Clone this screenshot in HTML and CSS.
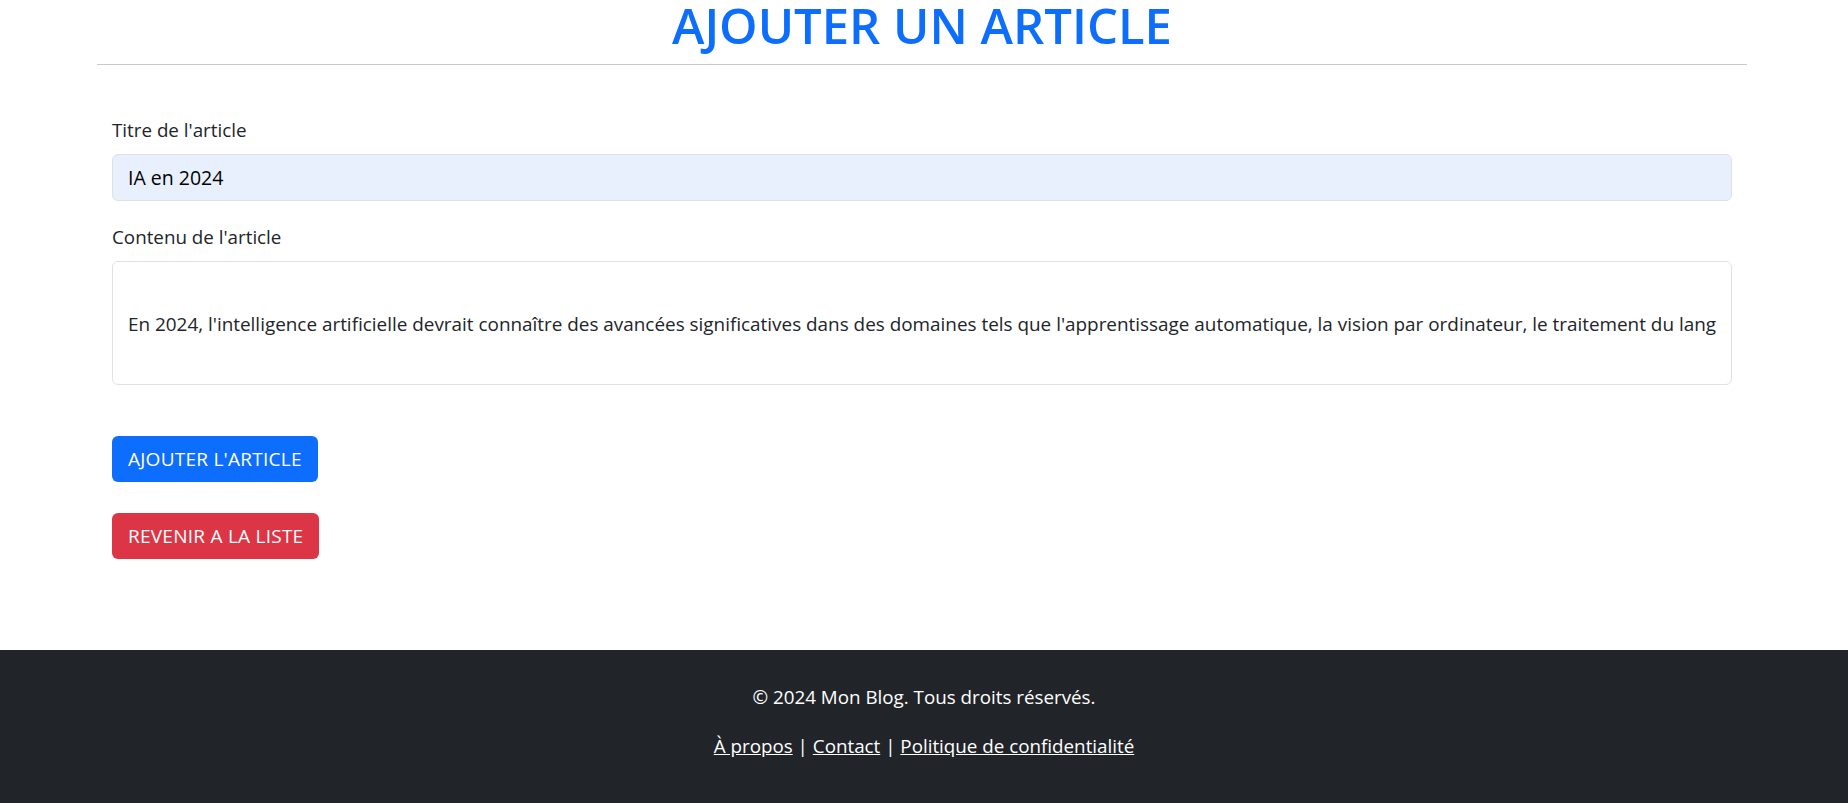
FILE: index.html
```html
<!DOCTYPE html>
<html lang="fr">
<head>
<meta charset="utf-8">
<title>Ajouter un article</title>
<link rel="stylesheet" href="styles.css">
</head>
<body>
<main class="page">
  <h1 class="page-title">AJOUTER UN ARTICLE</h1>
  <hr class="rule">
  <form class="article-form">
    <div class="field">
      <label class="field-label" for="titre">Titre de l'article</label>
      <input class="field-input" id="titre" type="text" value="IA en 2024">
    </div>
    <div class="field">
      <label class="field-label" for="contenu">Contenu de l'article</label>
      <div class="field-area" id="contenu"><div class="field-area-text">En 2024, l'intelligence artificielle devrait connaître des avancées significatives dans des domaines tels que l'apprentissage automatique, la vision par ordinateur, le traitement du lang</div></div>
    </div>
    <div class="actions">
      <button type="button" class="btn btn-primary">AJOUTER L'ARTICLE</button>
      <button type="button" class="btn btn-danger">REVENIR A LA LISTE</button>
    </div>
  </form>
</main>
<footer class="site-footer">
  <p class="footer-line">© 2024 Mon Blog. Tous droits réservés.</p>
  <p class="footer-line"><a href="#">À propos</a> | <a href="#">Contact</a> | <a href="#">Politique de confidentialité</a></p>
</footer>
</body>
</html>
```
FILE: styles.css
```css
* { box-sizing: border-box; }
html, body { margin: 0; padding: 0; }
body {
  font-family: "Open Sans", "Noto Sans", sans-serif;
  font-size: 18.8px;
  color: #212529;
  background: #fff;
}
.page {
  margin: 0 101px 0 97px;
  min-height: 650px;
  padding-bottom: 20px;
}
.page-title {
  margin: 0;
  text-align: center;
  font-size: 49px;
  line-height: 50px;
  font-weight: 600;
  color: #0d6efd;
}
.rule {
  margin: 14px 0 0;
  border: 0;
  border-top: 1px solid #c8c9ca;
}
.article-form {
  padding: 52px 15px 0;
  display: flex;
  flex-direction: column;
}
.field { display: flex; flex-direction: column; }
.field + .field { margin-top: 23px; }
.field-label {
  line-height: 27px;
  margin-bottom: 10px;
}
.field-input {
  font: inherit;
  font-size: 19.5px;
  color: #000;
  height: 47px;
  padding: 9px 15px;
  line-height: 27px;
  background: #e8f0fe;
  border: 1px solid #dee2e6;
  border-radius: 6px;
  outline: none;
}
.field-area {
  height: 124px;
  border: 1px solid #dee2e6;
  border-radius: 6px;
  padding: 49px 6px 0 15px;
}
.field-area-text {
  overflow: hidden;
  white-space: nowrap;
  font-size: 18.9px;
  line-height: 27px;
}
.actions {
  display: flex;
  flex-direction: column;
  align-items: flex-start;
  gap: 31px;
  margin-top: 51px;
}
.btn {
  font: inherit;
  font-size: 19px;
  letter-spacing: 0.25px;
  height: 46px;
  padding: 0 16px;
  line-height: 27px;
  color: #fff;
  border: 0;
  border-radius: 6px;
}
.btn-primary { background: #0d6efd; }
.btn-danger { background: #dc3545; }
.site-footer {
  background: #212529;
  color: #fff;
  text-align: center;
  font-size: 18.8px;
  padding: 34px 0 50px;
}
.footer-line {
  margin: 0;
  line-height: 27px;
}
.footer-line + .footer-line { margin-top: 22px; }
.footer-line a { color: #fff; }
```
